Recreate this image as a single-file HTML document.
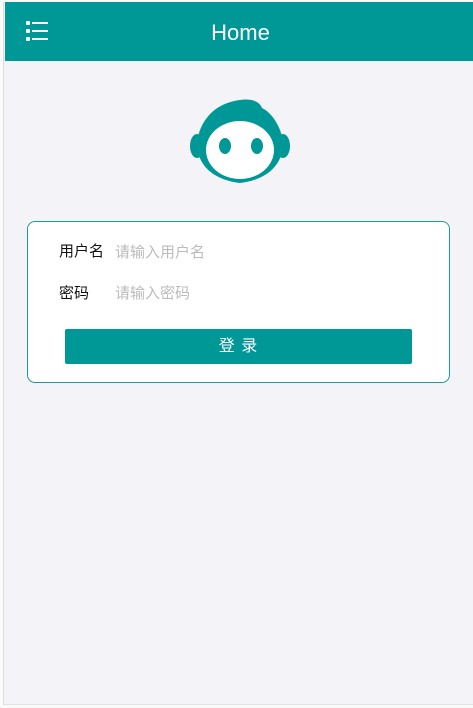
<!DOCTYPE html>
<html><head><meta charset="utf-8"><style>
html,body{margin:0;padding:0;width:473px;height:708px;overflow:hidden;background:#fafafa}
.page{position:absolute;left:3px;top:2px;width:470px;height:702px;background:#f4f4f8;border-left:1px solid #dcdcdc;border-bottom:1px solid #e2e2e2}
.hdr{position:absolute;left:1px;top:0;width:469px;height:59px;background:#009797;color:#fff;font-family:"Liberation Sans","Noto Sans CJK SC",sans-serif}
.hdr .t{position:absolute;left:0;right:0;top:18px;text-align:center;font-size:22px;padding-left:2px}
.card{position:absolute;left:23px;top:219px;width:421px;height:160px;background:#fff;border:1px solid #1a9c9c;border-radius:8px;font-family:"Liberation Sans","Noto Sans CJK SC",sans-serif;font-size:15px}
.lb{position:absolute;color:#111}
.ph{position:absolute;color:#bbb}
.btn{position:absolute;left:37px;top:107px;width:347px;height:35px;background:#009797;border-radius:2px;color:#fff;text-align:center;line-height:35px;font-size:16px;letter-spacing:1px}
</style></head><body>
<div class="page">
<div class="hdr">
<svg style="position:absolute;left:21px;top:19px" width="22" height="21" viewBox="0 0 22 21">
<g fill="#fff"><rect x="0" y="0" width="4" height="4" rx="1"/><rect x="0" y="8" width="4" height="4" rx="1"/><rect x="0" y="16" width="4" height="4" rx="1"/>
<rect x="6" y="1" width="16" height="2"/><rect x="6" y="9" width="16" height="2"/><rect x="6" y="17" width="16" height="2"/></g></svg>
<div class="t">Home</div>
</div>
<svg style="position:absolute;left:184px;top:96px" width="104" height="88" viewBox="0 0 104 88">
<g fill="#009797">
<ellipse cx="9" cy="48" rx="7" ry="12"/><ellipse cx="95" cy="48" rx="7" ry="12"/>
<path d="M52 2 C64 0 72 4 74 10 C82 14 88 22 92 32 C100 52 92 80 52 85 C12 80 4 52 12 32 C20 12 36 4 52 2 Z"/>
</g>
<ellipse cx="52" cy="52" rx="34" ry="29" fill="#fff"/>
<ellipse cx="37" cy="48" rx="6" ry="8" fill="#009797"/>
<ellipse cx="69" cy="48" rx="6" ry="8" fill="#009797"/>
</svg>
<div class="card">
<div class="lb" style="left:31px;top:18px">用户名</div>
<div class="ph" style="left:87px;top:19px">请输入用户名</div>
<div class="lb" style="left:31px;top:60px">密码</div>
<div class="ph" style="left:87px;top:60px">请输入密码</div>
<div class="btn">登 录</div>
</div>
</div>
</body></html>
